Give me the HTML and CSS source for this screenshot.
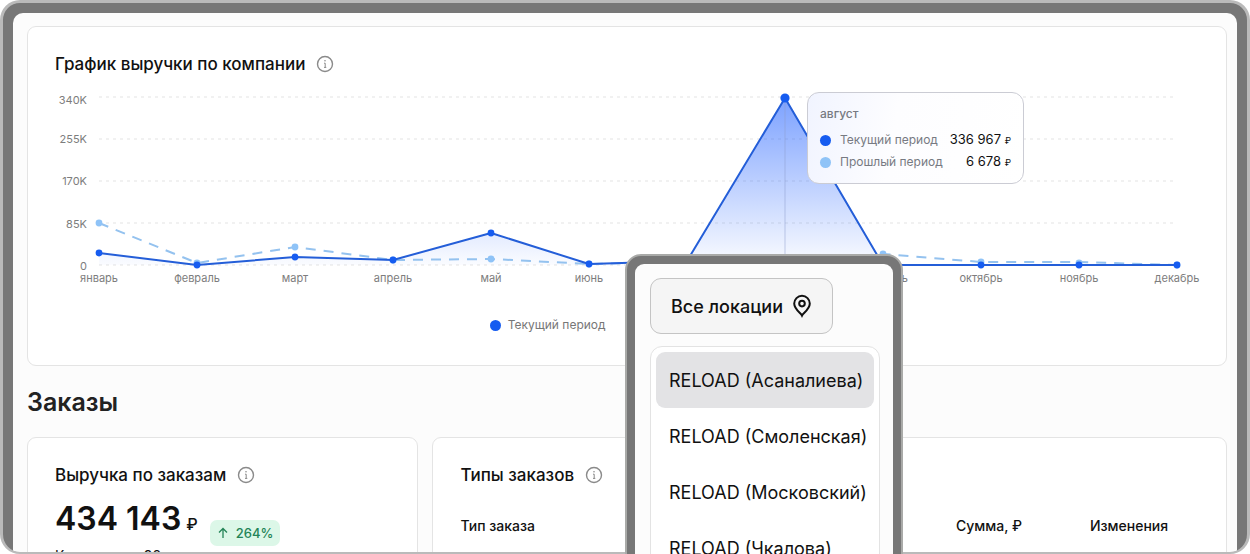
FILE: index.html
```
<!DOCTYPE html>
<html lang="ru">
<head>
  <meta charset="UTF-8" />
  <meta name="viewport" content="width=device-width, initial-scale=1.0" />
  <title>Выручка по компании</title>
  <link rel="stylesheet" href="styles.css">
</head>
<body>
<div class="stage">
  <div class="device">
    <main class="screen">

      <!-- График выручки -->
      <section class="card chart-card">
        <div class="card-head">
          <h2>График выручки по компании</h2>
          <svg class="info" viewBox="0 0 18 18"><circle cx="9" cy="9" r="7.5"/><path class="stem" d="M8 8.2h1.2v4.2M8 12.4h2.3"/><circle class="dot" cx="9" cy="5.8" r="0.8"/></svg>
        </div>
        <div class="chart">
          <svg class="plot" viewBox="0 0 1144 200">
            <defs>
              <linearGradient id="fill" gradientUnits="userSpaceOnUse" x1="0" y1="10" x2="0" y2="177">
                <stop offset="0" stop-color="#2563ff" stop-opacity="0.6"/>
                <stop offset="1" stop-color="#2563ff" stop-opacity="0.02"/>
              </linearGradient>
            </defs>
            <g class="grid">
              <path d="M44 9H1122M44 51H1122M44 93H1122M44 135H1122M44 177H1122"/>
            </g>
            <g class="ticks ticks-y">
              <text x="32" y="16">340K</text>
              <text x="32" y="55">255K</text>
              <text x="32" y="97">170K</text>
              <text x="32" y="140">85K</text>
              <text x="32" y="182">0</text>
            </g>
            <g class="ticks ticks-x">
              <text x="44" y="194">январь</text>
              <text x="142" y="194">февраль</text>
              <text x="240" y="194">март</text>
              <text x="338" y="194">апрель</text>
              <text x="436" y="194">май</text>
              <text x="534" y="194">июнь</text>
              <text x="632" y="194">июль</text>
              <text x="730" y="194">август</text>
              <text x="828" y="194">сентябрь</text>
              <text x="926" y="194">октябрь</text>
              <text x="1024" y="194">ноябрь</text>
              <text x="1122" y="194">декабрь</text>
            </g>
            <path fill="url(#fill)" d="M44 165L142 177L240 169L338 172L436 145L534 176L632 172L730 10L828 177H1122H44Z"/>
            <path class="cursor" d="M730 10V177"/>
            <polyline class="line prev" points="44,135 142,175 240,159 338,172 436,171 534,176 632,174 730,174 828,166 926,174 1024,174 1122,177"/>
            <g class="dots-prev">
              <circle cx="44" cy="135" r="3.4"/><circle cx="142" cy="175" r="3.4"/><circle cx="240" cy="159" r="3.4"/><circle cx="338" cy="172" r="3.4"/><circle cx="436" cy="171" r="3.4"/><circle cx="534" cy="176" r="3.4"/><circle cx="828" cy="166" r="3.4"/><circle cx="926" cy="174" r="3.4"/><circle cx="1024" cy="175" r="3.4"/><circle cx="1122" cy="177" r="3.4"/>
            </g>
            <polyline class="line current" points="44,165 142,177 240,169 338,172 436,145 534,176 632,173 730,10 828,177 926,177 1024,177 1122,177"/>
            <g class="dots-current">
              <circle cx="44" cy="165" r="3.4"/><circle cx="142" cy="177" r="3.4"/><circle cx="240" cy="169" r="3.4"/><circle cx="338" cy="172" r="3.4"/><circle cx="436" cy="145" r="3.4"/><circle cx="534" cy="176" r="3.4"/><circle cx="632" cy="173" r="3.4"/><circle cx="730" cy="10" r="4.6"/><circle cx="828" cy="177" r="3.4"/><circle cx="926" cy="177" r="3.4"/><circle cx="1024" cy="177" r="3.4"/><circle cx="1122" cy="177" r="3.4"/>
            </g>
          </svg>
          <div class="tooltip">
            <strong>август</strong>
            <div class="tip-row"><i class="bullet"></i><span>Текущий период</span><b>336 967 <small>₽</small></b></div>
            <div class="tip-row"><i class="bullet light"></i><span>Прошлый период</span><b>6 678 <small>₽</small></b></div>
          </div>
        </div>
        <div class="legend">
          <span><i class="bullet"></i>Текущий период</span>
          <span><i class="bullet light"></i>Прошлый период</span>
        </div>
      </section>

      <!-- Заказы -->
      <h1>Заказы</h1>
      <div class="orders">
        <section class="card">
          <div class="card-head">
            <h2>Выручка по заказам</h2>
            <svg class="info" viewBox="0 0 18 18"><circle cx="9" cy="9" r="7.5"/><path class="stem" d="M8 8.2h1.2v4.2M8 12.4h2.3"/><circle class="dot" cx="9" cy="5.8" r="0.8"/></svg>
          </div>
          <div class="total">
            <span class="sum">434 143<small>₽</small></span>
            <span class="badge"><svg viewBox="0 0 12 12"><path d="M6 11V1.5M2 5.5L6 1.5L10 5.5"/></svg>264%</span>
          </div>
          <p class="count">Количество: 98</p>
        </section>
        <section class="card">
          <div class="card-head">
            <h2>Типы заказов</h2>
            <svg class="info" viewBox="0 0 18 18"><circle cx="9" cy="9" r="7.5"/><path class="stem" d="M8 8.2h1.2v4.2M8 12.4h2.3"/><circle class="dot" cx="9" cy="5.8" r="0.8"/></svg>
          </div>
          <table>
            <thead><tr><th>Тип заказа</th><th>Сумма, ₽</th><th>Изменения</th></tr></thead>
          </table>
        </section>
      </div>
    </main>
  </div>

  <!-- Выбор локации -->
  <aside class="popup">
    <div class="popup-screen">
      <button type="button" class="location">
        Все локации
        <svg viewBox="0 0 20 24"><path d="M10 21.5C9 19.2 2.2 15.5 2.2 9.6a7.8 7.8 0 0 1 15.6 0C17.8 15.5 11 19.2 10 21.5Z"/><circle cx="10" cy="9.6" r="2.8"/></svg>
      </button>
      <div class="menu">
        <button type="button" class="active">RELOAD (Асаналиева)</button>
        <button type="button">RELOAD (Смоленская)</button>
        <button type="button">RELOAD (Московский)</button>
        <button type="button">RELOAD (Чкалова)</button>
      </div>
    </div>
  </aside>
</div>
</body>
</html>
```
FILE: styles.css
```
* { box-sizing: border-box; }
body { margin: 0; background: #fff; color: #111; font-family: Inter, "Liberation Sans", sans-serif; }
h1, h2, p { margin: 0; }

.stage { position: relative; height: 100vh; overflow: hidden; }
.device { height: 100%; border: 3px solid #bababa; border-bottom-width: 2px; border-radius: 20px; background: #777; padding: 10px 10px 0; overflow: hidden; }
.screen { height: 100%; background: #fcfcfc; border-radius: 10px 10px 0 0; padding: 13px 10px 0 14px; overflow: hidden; }

.card { background: #fff; border: 1px solid #e4e4e4; border-radius: 9px; padding: 24px 27px; }
.card-head { display: flex; align-items: center; gap: 11px; height: 26px; }
h2 { font-size: 17px; font-weight: 500; line-height: 26px; }
.info { width: 18px; height: 18px; fill: none; stroke: #8a8a8a; stroke-width: 1.4; }
.info .stem { stroke-width: 1; }
.info .dot { fill: #8a8a8a; stroke: none; }

.chart-card { height: 340px; }
.chart { position: relative; margin-top: 11px; }
.plot { display: block; width: 100%; overflow: visible; }
.grid { stroke: #e3e3e3; stroke-width: 1; stroke-dasharray: 3 4; fill: none; }
.ticks { font-size: 11px; fill: #7d7d7d; }
.ticks-y { text-anchor: end; }
.ticks-x { text-anchor: middle; }
.line { fill: none; stroke-width: 2; stroke-linejoin: round; }
.current { stroke: #245ed8; }
.prev { stroke: #94c2ef; stroke-dasharray: 10 8; }
.dots-prev { fill: #8fc3f7; }
.dots-current { fill: #165cf0; }
.cursor { stroke: #8d9ccc; stroke-opacity: 0.5; }

.tooltip { position: absolute; right: 175px; top: 4px; width: 217px; height: 92px; padding: 13px 12px; border: 1px solid #cbccd4; border-radius: 12px; background: linear-gradient(100deg, #f1f4ff, #fdfdff 40%, #fff); font-size: 13px; color: #777a82; }
.tooltip strong { display: block; font-size: 12px; font-weight: 500; line-height: 16px; margin-bottom: 7px; }
.tip-row { display: flex; align-items: center; height: 22px; line-height: 22px; white-space: nowrap; }
.tip-row b { margin-left: auto; font-weight: 400; color: #111; }
.tip-row small { font-size: 9px; }
.tip-row .bullet { margin-right: 9px; }
.tip-row span { font-size: 12px; }
.bullet { display: block; width: 11px; height: 11px; border-radius: 50%; background: #165cf0; }
.bullet.light { background: #8fc3f7; }

.legend { display: flex; justify-content: center; gap: 38px; margin-top: 27px; font-size: 12px; line-height: 20px; color: #777; }
.legend span { display: flex; align-items: center; gap: 7px; }

h1 { margin: 20px 0 19px; font-size: 25px; line-height: 32px; font-weight: 600; color: #222; }
.orders { display: grid; grid-template-columns: 33fr 67fr; gap: 14px; height: 300px; }
.total { display: flex; align-items: flex-end; gap: 12px; margin-top: 11px; height: 47px; }
.sum { font-size: 32px; font-weight: 600; line-height: 40px; align-self: flex-start; }
.sum small { margin-left: 5px; font-size: 16px; font-weight: 500; }
.badge { display: flex; align-items: center; gap: 7px; height: 26px; padding: 0 7px; border-radius: 7px; background: #dcf7e8; color: #238457; font-size: 13px; font-weight: 500; }
.badge svg { width: 12px; height: 12px; fill: none; stroke: #238457; stroke-width: 1.3; }
.count { font-size: 14px; line-height: 20px; }
table { width: 100%; margin-top: 28px; table-layout: fixed; border-collapse: collapse; }
th { width: 140px; padding: 0; font-size: 14px; font-weight: 500; line-height: 20px; }
th:first-child { width: auto; text-align: left; }

.popup { position: absolute; left: 50%; top: 254px; width: 278px; height: 340px; border: 2px solid #a9aaa8; border-radius: 16px; background: #777; padding: 8px; }
.popup-screen { height: 100%; border-radius: 9px; background: #fcfcfc; padding: 14px 13px 0 15px; }
.popup button { font: inherit; color: #111; cursor: pointer; }
.popup .location { display: flex; align-items: center; gap: 9px; height: 56px; padding: 0 20px; border: 1px solid #c4c4c4; border-radius: 11px; background: #f5f5f5; font-size: 18px; font-weight: 500; }
.location svg { width: 20px; height: 24px; fill: none; stroke: #111; stroke-width: 2; }
.menu { display: flex; flex-direction: column; margin-top: 12px; padding: 5px; height: 260px; border: 1px solid #e3e3e3; border-radius: 12px; background: #fff; }
.menu button { height: 56px; flex: none; padding: 0 13px; border: 0; border-radius: 9px; background: none; text-align: left; white-space: nowrap; }
.popup .menu button { font-size: 18px; }
.menu .active { background: #e3e3e5; }
```
